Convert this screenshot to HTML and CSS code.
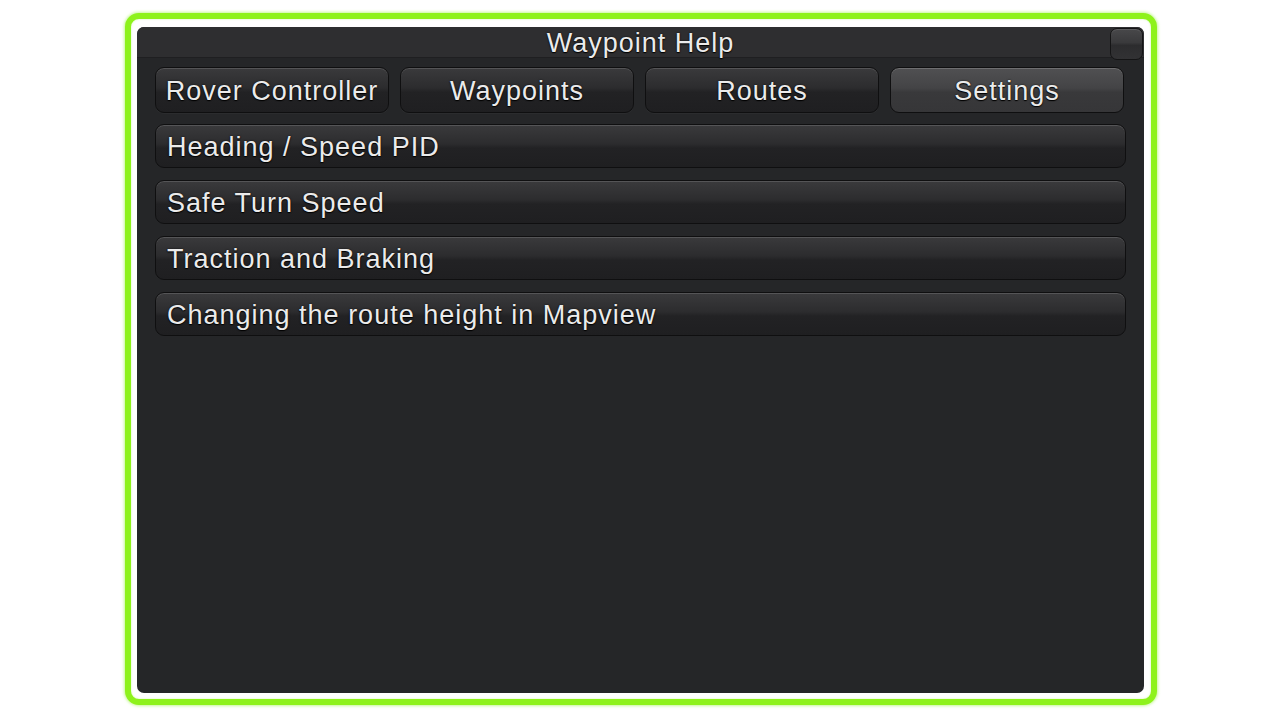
FILE: index.html
```html
<!DOCTYPE html>
<html>
<head>
<meta charset="utf-8">
<link rel="stylesheet" href="styles.css">
</head>
<body>
<div class="frame">
  <div class="panel">
    <div class="titlebar">Waypoint Help</div>
    <div class="close"></div>
    <div class="tabs">
      <div class="tab">Rover Controller</div>
      <div class="tab">Waypoints</div>
      <div class="tab">Routes</div>
      <div class="tab active">Settings</div>
    </div>
    <div class="list">
      <div class="item">Heading / Speed PID</div>
      <div class="item">Safe Turn Speed</div>
      <div class="item">Traction and Braking</div>
      <div class="item">Changing the route height in Mapview</div>
    </div>
  </div>
</div>
</body>
</html>
```
FILE: styles.css
```css
html, body {
  margin: 0;
  padding: 0;
  background: #ffffff;
  width: 1280px;
  height: 720px;
  overflow: hidden;
}
.frame {
  box-sizing: border-box;
  margin-left: 125px;
  margin-top: 13px;
  width: 1032px;
  height: 692px;
  border: 6px solid #8ef21c;
  border-radius: 14px;
  padding: 8px 7px 6px 6px;
  box-shadow: 0 0 3px 1px rgba(160, 240, 80, 0.6), inset 0 0 2px rgba(160, 240, 80, 0.5);
  background: #ffffff;
}
.panel {
  position: relative;
  height: 100%;
  background: #252628;
  border-radius: 7px;
  font-family: "Liberation Sans", Arial, sans-serif;
  font-size: 27px;
  letter-spacing: 1px;
  color: #ebebeb;
  text-shadow: 0 1px 1px #000, 0 0 2px rgba(0,0,0,0.8);
  display: flex;
  flex-direction: column;
}
.titlebar {
  height: 31px;
  line-height: 32px;
  background: #2e2e30;
  border-radius: 7px 7px 0 0;
  text-align: center;
  border-bottom: 1px solid #1f1f21;
  box-sizing: border-box;
}
.close {
  position: absolute;
  top: 1px;
  right: 1px;
  width: 33px;
  height: 32px;
  box-sizing: border-box;
  border: 1px solid #141415;
  border-radius: 7px;
  background: linear-gradient(#48484a 0%, #3a3a3c 45%, #2c2c2e 55%, #323234 100%);
  box-shadow: inset 0 1px 0 rgba(255,255,255,0.12);
}
.tabs {
  display: flex;
  gap: 11px;
  padding: 9px 18px 0 18px;
}
.tab {
  box-sizing: border-box;
  width: 234px;
  height: 46px;
  line-height: 46px;
  text-align: center;
  border: 1px solid #0f0f10;
  border-radius: 9px;
  background: linear-gradient(#3a3a3c 0%, #2c2c2e 45%, #222224 55%, #1f1f21 100%);
  box-shadow: inset 0 1px 0 rgba(255,255,255,0.14), 0 1px 0 rgba(255,255,255,0.03);
}
.tab.active {
  background: linear-gradient(#505052 0%, #444446 45%, #39393b 55%, #363638 100%);
  box-shadow: inset 0 1px 0 rgba(255,255,255,0.18);
}
.list {
  display: flex;
  flex-direction: column;
  gap: 12px;
  padding: 11px 18px 0 18px;
}
.item {
  box-sizing: border-box;
  height: 44px;
  line-height: 44px;
  padding-left: 11px;
  border: 1px solid #0f0f10;
  border-radius: 9px;
  background: linear-gradient(#3a3a3c 0%, #2c2c2e 45%, #222224 55%, #1f1f21 100%);
  box-shadow: inset 0 1px 0 rgba(255,255,255,0.14);
}
```
